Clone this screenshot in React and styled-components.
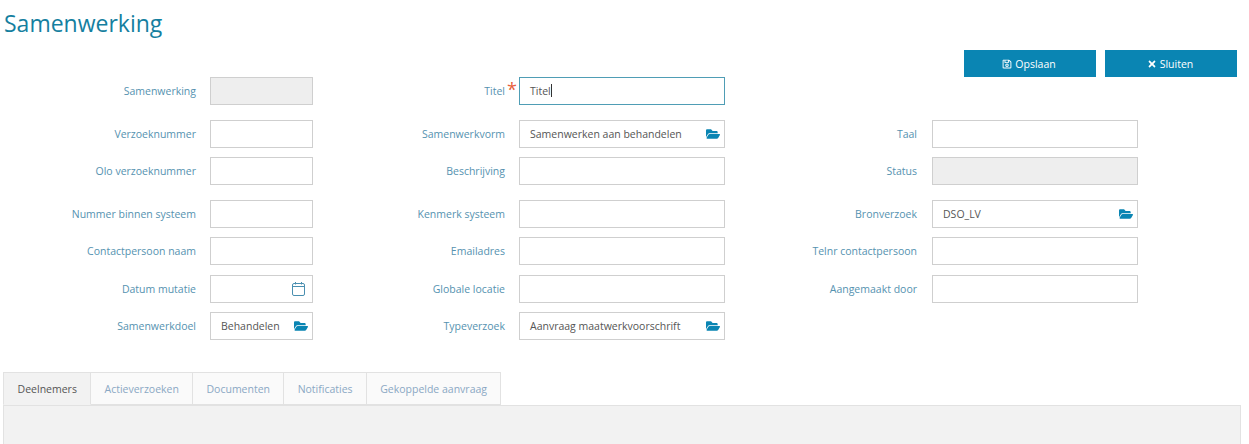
import React from 'react';
import styled, {createGlobalStyle} from 'styled-components';
import {FaFolderOpen, FaRegSave, FaTimes} from 'react-icons/fa';

const GlobalStyle = createGlobalStyle`
    html, body
    {
        margin: 0;
        padding: 0;
        height: 444px;
        overflow: hidden;
        background-color: #fff;
        font-family: "Open Sans", "Liberation Sans", sans-serif;
    }
`;

const rows = [
    [
        {label: 'Samenwerking', disabled: true},
        {label: 'Titel', value: 'Titel', required: true, focused: true},
        null
    ],
    [
        {label: 'Verzoeknummer'},
        {label: 'Samenwerkvorm', value: 'Samenwerken aan behandelen', icon: 'folder'},
        {label: 'Taal'}
    ],
    [
        {label: 'Olo verzoeknummer'},
        {label: 'Beschrijving'},
        {label: 'Status', disabled: true}
    ],
    [
        {label: 'Nummer binnen systeem'},
        {label: 'Kenmerk systeem'},
        {label: 'Bronverzoek', value: 'DSO_LV', icon: 'folder'}
    ],
    [
        {label: 'Contactpersoon naam'},
        {label: 'Emailadres'},
        {label: 'Telnr contactpersoon'}
    ],
    [
        {label: 'Datum mutatie', icon: 'calendar'},
        {label: 'Globale locatie'},
        {label: 'Aangemaakt door'}
    ],
    [
        {label: 'Samenwerkdoel', value: 'Behandelen', icon: 'folder'},
        {label: 'Typeverzoek', value: 'Aanvraag maatwerkvoorschrift', icon: 'folder'},
        null
    ]
];

const tabs = ['Deelnemers', 'Actieverzoeken', 'Documenten', 'Notificaties', 'Gekoppelde aanvraag'];

function CalendarIcon()
{
    return (
        <svg width="14" height="14" viewBox="0 0 14 14" fill="none" stroke="#4a8fb0" strokeWidth="1">
            <rect x="0.5" y="1.5" width="12" height="12" rx="1.5"/>
            <path d="M0.5 4.5H12.5M3.5 0V2.5M9.5 0V2.5"/>
        </svg>
    );
}

function Field({field})
{
    return (
        <>
            <Label>
                {field.label}
                {field.required && <Required>*</Required>}
            </Label>
            <Box $disabled={field.disabled} $focused={field.focused}>
                <span>{field.value}</span>
                {field.focused && <Caret/>}
                {field.icon === 'folder' && <FolderIcon><FaFolderOpen/></FolderIcon>}
                {field.icon === 'calendar' && <CalendarSlot><CalendarIcon/></CalendarSlot>}
            </Box>
        </>
    );
}

function App()
{
    return (
        <Page>
            <GlobalStyle/>
            <Title>Samenwerking</Title>
            <Actions>
                <Button><FaRegSave/>Opslaan</Button>
                <Button><FaTimes/>Sluiten</Button>
            </Actions>
            <Form>
                {rows.map((row) => row.map((field, index) => (
                    field
                        ? <Field key={field.label} field={field}/>
                        : <React.Fragment key={index}><span/><span/></React.Fragment>
                )))}
            </Form>
            <Tabs>
                {tabs.map((tab, index) => (
                    <Tab key={tab} $active={index === 0}>{tab}</Tab>
                ))}
            </Tabs>
            <Panel/>
        </Page>
    );
}

const Page = styled.div`
    height: 444px;
    overflow: hidden;
    padding: 0 8px 0 3px;
    box-sizing: border-box;
`;

const Title = styled.h1`
    margin: 0;
    padding: 6px 0 0 1px;
    height: 50px;
    box-sizing: border-box;
    font-size: 23px;
    line-height: 35px;
    font-weight: 400;
    color: #157f9f;
`;

const Actions = styled.div`
    display: flex;
    justify-content: flex-end;
    gap: 9px;
    padding-right: 4px;
`;

const Button = styled.div`
    width: 132px;
    height: 27px;
    padding-right: 2px;
    box-sizing: border-box;
    display: flex;
    align-items: center;
    justify-content: center;
    gap: 3px;
    background-color: #0a85b3;
    color: #fff;
    font-size: 10.5px;
    svg
    {
        font-size: 10px;
    }
`;

const Form = styled.div`
    display: grid;
    grid-template-columns: 207px 103px 206px 206px 207px 206px;
    grid-template-rows: 43px 37px 43px 37px 38px 37px 28px;
    align-items: start;
`;

const Label = styled.div`
    height: 27px;
    padding-right: 14px;
    display: flex;
    align-items: center;
    justify-content: flex-end;
    font-size: 10.5px;
    color: #5592b0;
    white-space: nowrap;
    position: relative;
    &:nth-child(6n + 5)
    {
        padding-right: 15px;
    }
`;

const Required = styled.span`
    position: absolute;
    right: 2px;
    top: 3px;
    font-size: 18px;
    line-height: 18px;
    color: #e8603c;
`;

const Box = styled.div`
    height: 28px;
    box-sizing: border-box;
    padding: 0 10px 1px;
    display: flex;
    align-items: center;
    font-size: 10.5px;
    color: #555;
    border: 1px solid ${({$focused}) => ($focused ? '#4f9db5' : '#cfcfcf')};
    background-color: ${({$disabled}) => ($disabled ? '#eeeeee' : '#fff')};
`;

const Caret = styled.span`
    width: 1px;
    height: 13px;
    background-color: #333;
`;

const FolderIcon = styled.span`
    margin-left: auto;
    margin-right: -6px;
    display: flex;
    font-size: 14px;
    color: #0a85b3;
`;

const CalendarSlot = styled.span`
    margin-left: auto;
    margin-right: -4px;
    display: flex;
`;

const Tabs = styled.div`
    display: flex;
    margin-top: 32px;
    height: 33px;
    box-sizing: border-box;
`;

const Tab = styled.div`
    padding: 0 13px 0 13.6px;
    display: flex;
    align-items: center;
    box-sizing: border-box;
    font-size: 10.5px;
    color: ${({$active}) => ($active ? '#555' : '#8aa8c4')};
    background-color: ${({$active}) => ($active ? '#f2f2f2' : '#fafafa')};
    border: 1px solid #e2e2e2;
    border-left-width: ${({$active}) => ($active ? '1px' : '0')};
    border-bottom-color: ${({$active}) => ($active ? '#f2f2f2' : '#e2e2e2')};
`;

const Panel = styled.div`
    height: 60px;
    background-color: #f2f2f2;
    border: 1px solid #e2e2e2;
    box-sizing: border-box;
`;

export default App;
